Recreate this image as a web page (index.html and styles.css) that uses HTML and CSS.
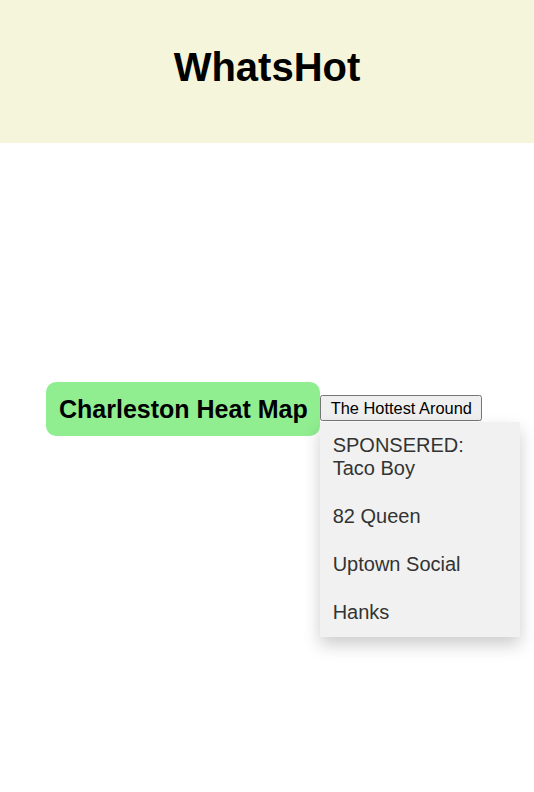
FILE: index.html
```html
<!DOCTYPE html>
<html>
<head>
<meta charset="utf-8">
<link rel="stylesheet" href="styles.css">
</head>
<body>
<header class="top">
  <h1 class="title">WhatsHot</h1>
</header>
<main class="main">
  <div class="row">
    <div class="map-label">Charleston Heat Map</div>
    <div class="dropdown">
      <button class="drop-btn">The Hottest Around</button>
      <div class="drop-menu">
        <a class="drop-item" href="#">SPONSERED:<br>Taco Boy</a>
        <a class="drop-item" href="#">82 Queen</a>
        <a class="drop-item" href="#">Uptown Social</a>
        <a class="drop-item" href="#">Hanks</a>
      </div>
    </div>
  </div>
</main>
</body>
</html>
```
FILE: styles.css
```css
html, body {
  margin: 0;
  padding: 0;
  background: #fff;
  font-family: "Liberation Sans", Arial, sans-serif;
}
body {
  min-height: 792px;
}
.top {
  background: #f5f5dc;
  height: 143px;
  display: flex;
  align-items: center;
  justify-content: center;
}
.title {
  margin: 0;
  font-size: 40px;
  font-weight: bold;
  color: #000;
  position: relative;
  top: -4px;
}
.main {
  padding: 239px 0 0 46px;
  min-height: 400px;
}
.row {
  display: flex;
  align-items: center;
}
.map-label {
  background: #90ee90;
  border-radius: 10px;
  padding: 13px 12px 13px 13px;
  font-size: 25px;
  font-weight: bold;
  line-height: 28px;
  color: #000;
  white-space: nowrap;
}
.dropdown {
  position: relative;
  height: 26px;
  margin-bottom: 2px;
}
.drop-btn {
  font-family: "Liberation Sans", Arial, sans-serif;
  font-size: 16.4px;
  padding: 1px 8px 1px 9px;
  height: 26px;
  margin: 0;
  display: block;
  color: #000;
  white-space: nowrap;
}
.drop-menu {
  position: absolute;
  left: 0;
  top: 27px;
  width: 200px;
  background: #f1f1f1;
  box-shadow: 0 8px 16px rgba(0, 0, 0, 0.2);
  z-index: 2;
}
.drop-item {
  display: block;
  padding: 12px 13px 13px;
  font-size: 20px;
  line-height: 23px;
  color: #333;
  text-decoration: none;
}
```
